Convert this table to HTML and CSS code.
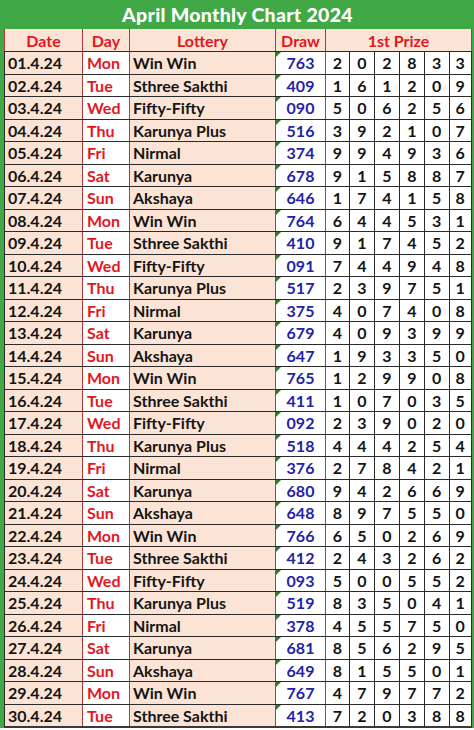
FILE: index.html
```html
<!DOCTYPE html>
<html lang="en">
<head>
<meta charset="utf-8">
<title>April Monthly Chart 2024</title>
<link rel="stylesheet" href="styles.css">
</head>
<body>
<div class="sheet">
  <div class="title">April Monthly Chart 2024</div>
  <table class="chart">
    <colgroup>
      <col class="c-date"><col class="c-day"><col class="c-lot"><col class="c-draw">
      <col class="c-d1"><col class="c-d2"><col class="c-d3"><col class="c-d4"><col class="c-d5"><col class="c-d6">
    </colgroup>
    <thead>
      <tr class="head">
        <th>Date</th><th>Day</th><th>Lottery</th><th>Draw</th><th colspan="6">1st Prize</th>
      </tr>
    </thead>
    <tbody id="rows"></tbody>
  </table>
</div>
<script src="script.js"></script>
</body>
</html>
```
FILE: script.js
```js
const data = [
["01.4.24","Mon","Win Win","763","202833"],
["02.4.24","Tue","Sthree Sakthi","409","161209"],
["03.4.24","Wed","Fifty-Fifty","090","506256"],
["04.4.24","Thu","Karunya Plus","516","392107"],
["05.4.24","Fri","Nirmal","374","994936"],
["06.4.24","Sat","Karunya","678","915887"],
["07.4.24","Sun","Akshaya","646","174158"],
["08.4.24","Mon","Win Win","764","644531"],
["09.4.24","Tue","Sthree Sakthi","410","917452"],
["10.4.24","Wed","Fifty-Fifty","091","744948"],
["11.4.24","Thu","Karunya Plus","517","239751"],
["12.4.24","Fri","Nirmal","375","407408"],
["13.4.24","Sat","Karunya","679","409399"],
["14.4.24","Sun","Akshaya","647","193350"],
["15.4.24","Mon","Win Win","765","129908"],
["16.4.24","Tue","Sthree Sakthi","411","107035"],
["17.4.24","Wed","Fifty-Fifty","092","239020"],
["18.4.24","Thu","Karunya Plus","518","444254"],
["19.4.24","Fri","Nirmal","376","278421"],
["20.4.24","Sat","Karunya","680","942669"],
["21.4.24","Sun","Akshaya","648","897550"],
["22.4.24","Mon","Win Win","766","650269"],
["23.4.24","Tue","Sthree Sakthi","412","243262"],
["24.4.24","Wed","Fifty-Fifty","093","500552"],
["25.4.24","Thu","Karunya Plus","519","835041"],
["26.4.24","Fri","Nirmal","378","455750"],
["27.4.24","Sat","Karunya","681","856295"],
["28.4.24","Sun","Akshaya","649","815501"],
["29.4.24","Mon","Win Win","767","479772"],
["30.4.24","Tue","Sthree Sakthi","413","720388"]
];
const tb = document.getElementById("rows");
for (const [date, day, lot, draw, digits] of data) {
  const tr = document.createElement("tr");
  let html = `<td class="date">${date}</td><td class="day">${day}</td><td class="lot">${lot}</td><td class="draw">${draw}</td>`;
  for (const d of digits) html += `<td class="dig">${d}</td>`;
  tr.innerHTML = html;
  tb.appendChild(tr);
}
```
FILE: styles.css
```css
html, body {
  margin: 0;
  padding: 0;
  background: #ffffff;
}
.sheet {
  width: 474px;
  background: #41a846;
  padding: 0 3px 0 4px;
  box-sizing: border-box;
  font-family: Lato, "Open Sans", sans-serif;
  font-weight: 700;
}
.title {
  height: 29px;
  line-height: 29px;
  color: #ffffff;
  text-align: center;
  font-size: 19.5px;
  font-weight: 900;
  letter-spacing: 0.3px;
}
.chart {
  width: 467px;
  border-collapse: collapse;
  table-layout: fixed;
  font-size: 16px;
}
.c-date { width: 78px; }
.c-day { width: 47px; }
.c-lot { width: 146px; }
.c-draw { width: 50px; }
.c-d1 { width: 24px; }
.c-d2 { width: 25px; }
.c-d3 { width: 25px; }
.c-d4 { width: 25px; }
.c-d5 { width: 24.5px; }
.c-d6 { width: 22.5px; }
.chart th, .chart td {
  padding: 0;
  border: 1px solid #2b2b2b;
  white-space: nowrap;
  overflow: hidden;
}
.head th {
  height: 22px;
  background: #fbe4d5;
  color: #e3171d;
  font-weight: 700;
  text-align: center;
  border-left: 1px solid #b23a3e;
  border-right: 1px solid #b23a3e;
  border-top: none;
}
.chart tbody tr {
  height: 22.5px;
}
.chart tbody tr:last-child td {
  border-bottom: 2px solid #3a3a3a;
}
.date {
  background: #fbe4d5;
  color: #141414;
  padding-left: 3px !important;
  border-right: 1px solid #b23a3e !important;
}
.day {
  background: #ffffff;
  color: #e3171d;
  padding-left: 4px !important;
  border-right: 1px solid #b23a3e !important;
}
.lot {
  background: #fbe4d5;
  color: #141414;
  padding-left: 3px !important;
  border-right: 1px solid #b23a3e !important;
}
.draw {
  position: relative;
  background: #ffffff;
  color: #2323a8;
  text-align: center;
  border-right: 1px solid #b23a3e !important;
}
.draw::before {
  content: "";
  position: absolute;
  left: 0;
  top: 0;
  border-top: 5px solid #2f7a2a;
  border-right: 5px solid transparent;
}
.dig {
  background: #ffffff;
  color: #141414;
  text-align: center;
}
```
